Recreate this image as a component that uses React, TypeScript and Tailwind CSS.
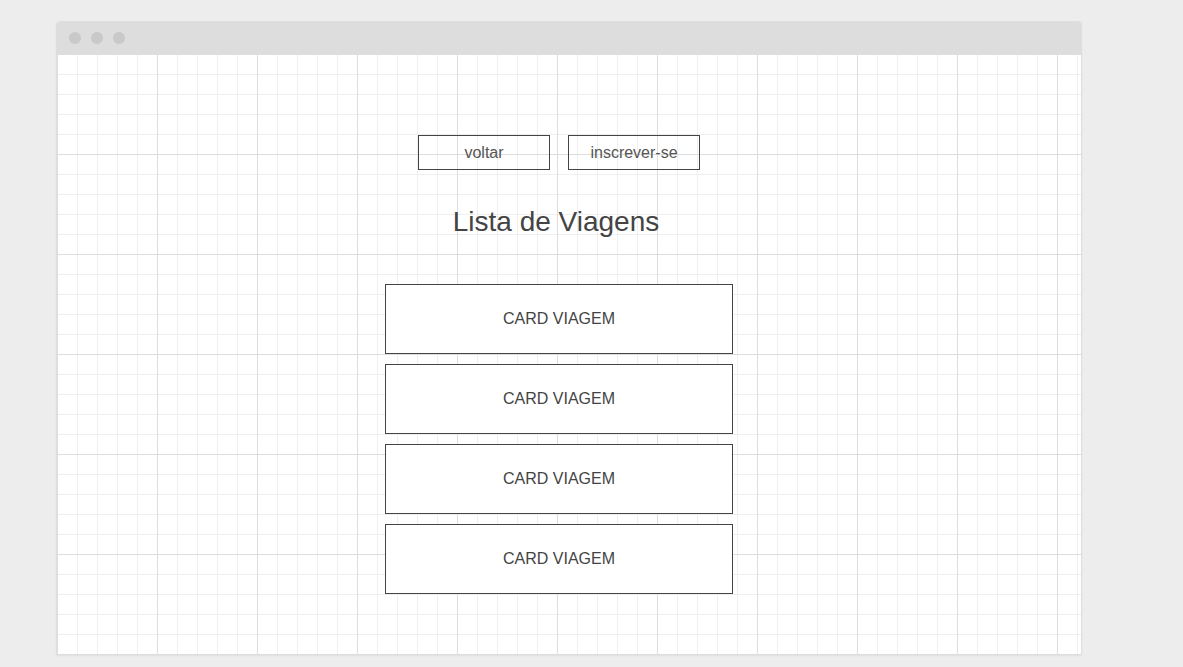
const cards = ["CARD VIAGEM", "CARD VIAGEM", "CARD VIAGEM", "CARD VIAGEM"];

export default function App() {
  return (
    <div className="min-h-[667px] w-full bg-[#ededed] pt-[21px] pl-[56px] font-['Liberation_Sans',Arial,sans-serif]">
      <div className="flex h-[634px] w-[1026px] flex-col overflow-hidden rounded-t-[3px] border border-[#dedede] bg-white shadow-[0_1px_2px_rgba(0,0,0,0.06)]">
        {/* window title bar */}
        <div className="flex h-[32px] shrink-0 items-center gap-[10px] bg-[#dddddd] pl-[12px]">
          <span className="h-[12px] w-[12px] rounded-full bg-[#c9c9c9]" />
          <span className="h-[12px] w-[12px] rounded-full bg-[#c9c9c9]" />
          <span className="h-[12px] w-[12px] rounded-full bg-[#c9c9c9]" />
        </div>

        {/* grid canvas */}
        <div className="flex flex-1 flex-col items-center bg-white bg-[image:linear-gradient(to_right,#dedede_1px,transparent_1px),linear-gradient(to_bottom,#dedede_1px,transparent_1px),linear-gradient(to_right,#efefef_1px,transparent_1px),linear-gradient(to_bottom,#efefef_1px,transparent_1px)] bg-[size:100px_100px,100px_100px,20px_20px,20px_20px] pr-[20px] pt-[81px]">
          <div className="flex gap-[18px]">
            <button className="h-[35px] w-[132px] border border-[#444] text-[16px] text-[#555]">
              voltar
            </button>
            <button className="h-[35px] w-[132px] border border-[#444] text-[16px] text-[#555]">
              inscrever-se
            </button>
          </div>

          <h1 className="mt-[35px] mr-[6px] text-[28px] leading-[34px] text-[#444]">Lista de Viagens</h1>

          <div className="mt-[45px] flex flex-col gap-[10px]">
            {cards.map((label, i) => (
              <div
                key={i}
                className="flex h-[70px] w-[348px] items-center justify-center border border-[#444] bg-white text-[16px] text-[#444]"
              >
                {label}
              </div>
            ))}
          </div>
        </div>
      </div>
    </div>
  );
}
